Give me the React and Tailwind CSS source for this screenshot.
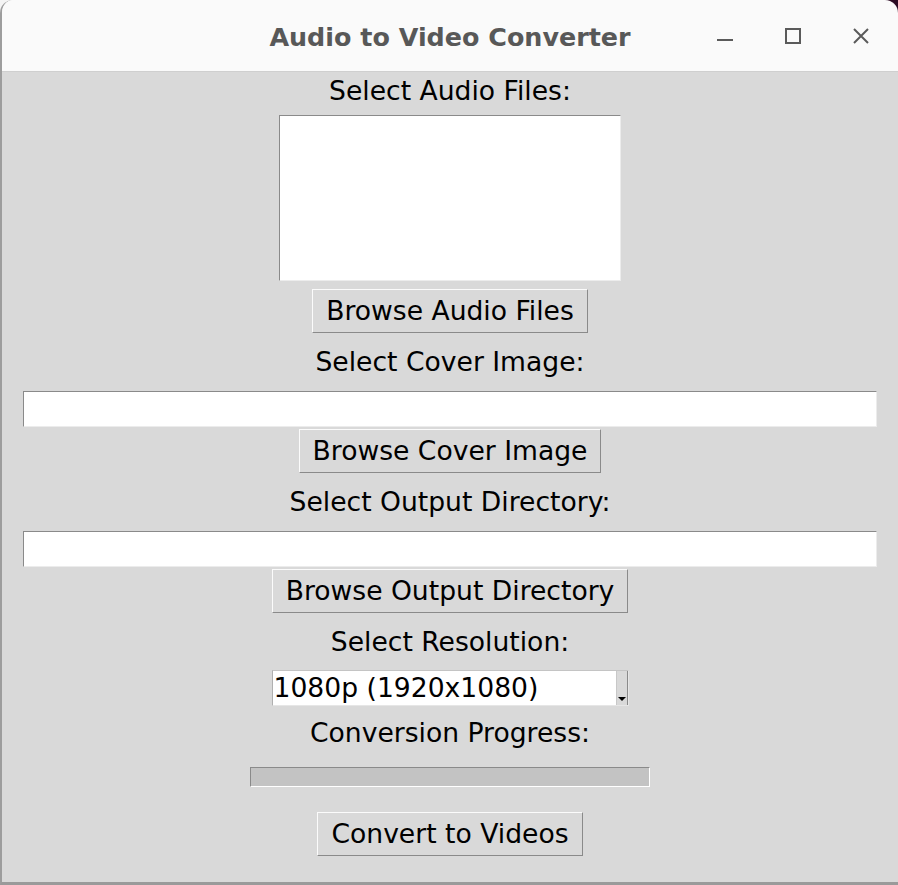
import React from "react";

const body = { fontFamily: '"DejaVu Sans", Verdana, sans-serif' };

function Label({ children, className = "" }) {
  return (
    <div className={`h-[30px] text-[26.6px] leading-[30px] text-black text-center whitespace-nowrap ${className}`}>
      {children}
    </div>
  );
}

function TkButton({ children, className = "" }) {
  return (
    <div className={`self-center h-[44px] flex items-center px-[13px] bg-[#d9d9d9] border border-t-[#fbfbfb] border-l-[#fbfbfb] border-b-[#8a8a8a] border-r-[#8a8a8a] text-[26.6px] leading-[30px] text-black whitespace-nowrap ${className}`}>
      {children}
    </div>
  );
}

function Entry({ className = "" }) {
  return (
    <div className={`mx-[21px] h-[36px] bg-white border border-t-[#8a8a8a] border-l-[#8a8a8a] border-b-[#ececec] border-r-[#ececec] ${className}`} />
  );
}

export default function App() {
  return (
    <div className="w-[898px] h-[885px] bg-[#f4f4f4] relative overflow-hidden" style={body}>
      <div className="absolute top-0 right-0 w-[20px] h-[72px] bg-[#2c0b24]" />
      <div className="relative w-[898px] h-[885px] flex flex-col rounded-t-[13px] overflow-hidden border-l-2 border-l-[#9d9d9d] border-b-[3px] border-b-[#9a9a9a]">
        {/* title bar */}
        <div className="h-[72px] shrink-0 bg-[#fafafa] border-b border-b-[#cfcfcf] grid grid-cols-[1fr_auto_1fr] items-center">
          <div />
          <div
            className="text-[25.4px] font-bold text-[#585858] leading-[30px] pt-[2px]"
            style={{ fontFamily: '"DejaVu Sans", sans-serif' }}
          >
            Audio to Video Converter
          </div>
          <div className="flex justify-end items-center pr-[3px]">
            <div className="w-[68px] h-[34px] flex items-center justify-center">
              <svg width="16" height="16" viewBox="0 0 16 16">
                <rect x="0" y="11" width="16" height="2" fill="#5a5a5a" />
              </svg>
            </div>
            <div className="w-[68px] h-[34px] flex items-center justify-center">
              <svg width="16" height="16" viewBox="0 0 16 16">
                <rect x="1" y="1" width="14" height="14" fill="none" stroke="#5a5a5a" strokeWidth="2" />
              </svg>
            </div>
            <div className="w-[68px] h-[34px] flex items-center justify-center">
              <svg width="16" height="16" viewBox="0 0 16 16">
                <path d="M1 1 L15 15 M15 1 L1 15" stroke="#5a5a5a" strokeWidth="2" />
              </svg>
            </div>
          </div>
        </div>

        {/* content */}
        <div className="flex-1 bg-[#d9d9d9] flex flex-col">
          <Label className="mt-[4px]">Select Audio Files:</Label>
          <div className="self-center mt-[9px] w-[342px] h-[166px] bg-white border border-t-[#8a8a8a] border-l-[#8a8a8a] border-b-[#ececec] border-r-[#ececec]" />
          <TkButton className="mt-[8px]">Browse Audio Files</TkButton>

          <Label className="mt-[14px]">Select Cover Image:</Label>
          <Entry className="mt-[14px]" />
          <TkButton className="mt-[2px]">Browse Cover Image</TkButton>

          <Label className="mt-[14px]">Select Output Directory:</Label>
          <Entry className="mt-[14px]" />
          <TkButton className="mt-[2px]">Browse Output Directory</TkButton>

          <Label className="mt-[14px]">Select Resolution:</Label>
          <div className="self-center mt-[13px] w-[357px] h-[36px] flex bg-white border border-t-[#c4c4c4] border-l-[#b0b0b0] border-b-[#e6e6e6] border-r-[#e6e6e6]">
            <div className="flex-1 pl-[1px] pt-[2px] text-[26.6px] leading-[30px] text-black whitespace-nowrap overflow-hidden">
              1080p (1920x1080)
            </div>
            <div className="w-[12px] bg-[#d9d9d9] border-l border-l-[#c8c8c8] border-r border-r-[#8a8a8a] flex items-end justify-center pb-[4px]">
              <svg width="8" height="4" viewBox="0 0 8 4">
                <path d="M0 0 L8 0 L4 4 Z" fill="#000" />
              </svg>
            </div>
          </div>

          <Label className="mt-[12px]">Conversion Progress:</Label>
          <div className="self-center mt-[19px] w-[400px] h-[20px] bg-[#c3c3c3] border border-t-[#8a8a8a] border-l-[#8a8a8a] border-b-white border-r-white" />

          <TkButton className="mt-[25px]">Convert to Videos</TkButton>
        </div>
      </div>
    </div>
  );
}
